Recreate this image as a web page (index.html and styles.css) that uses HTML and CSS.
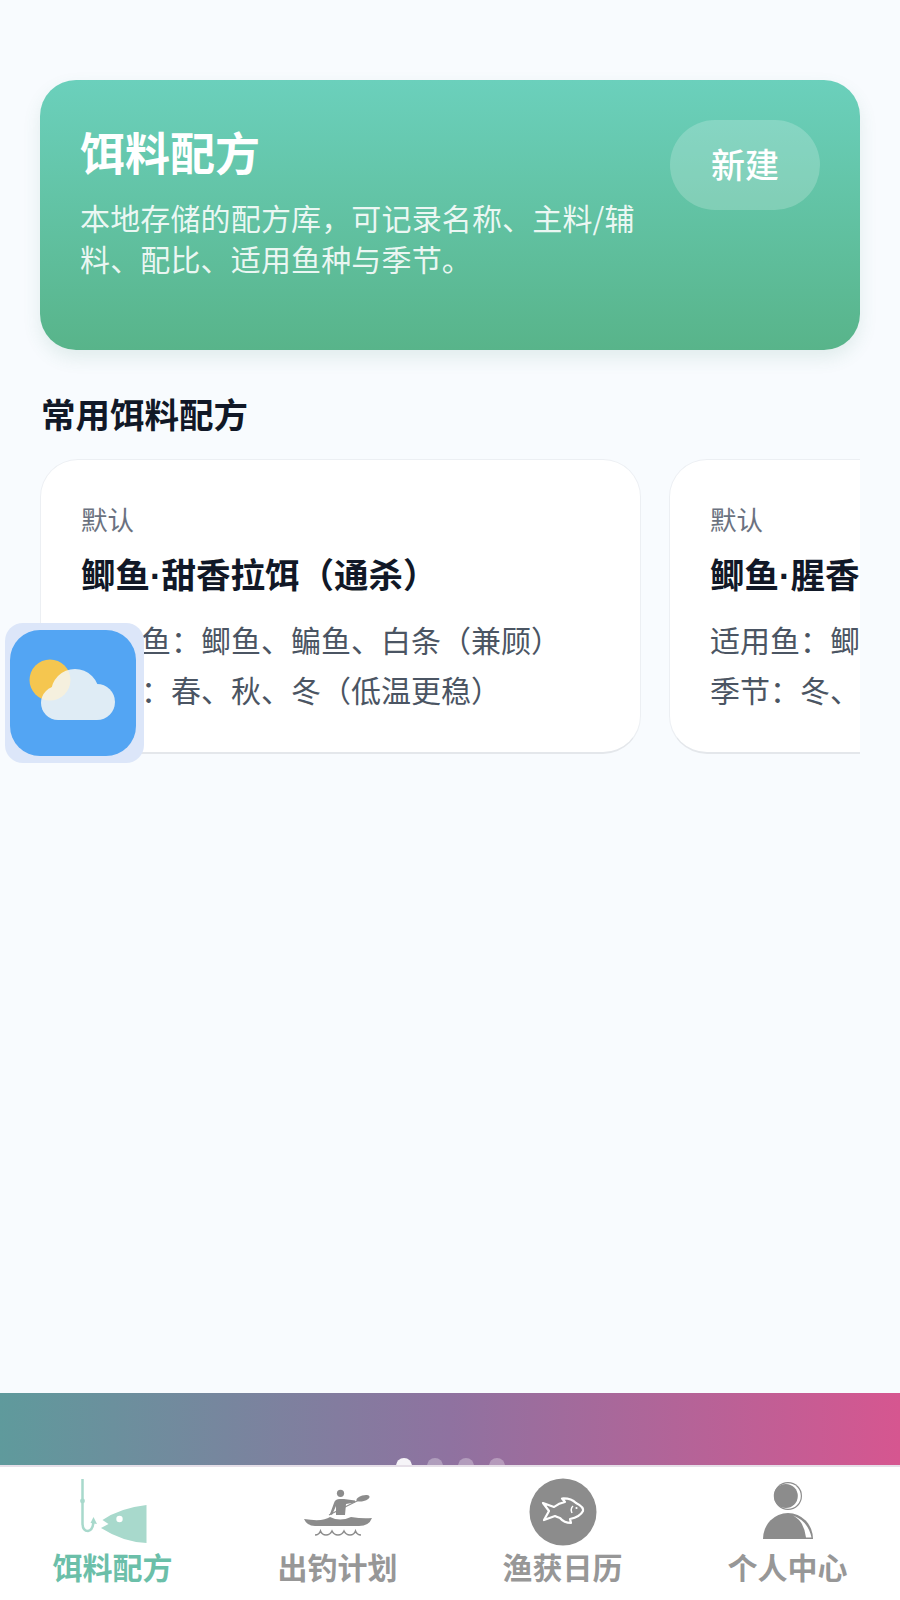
FILE: index.html
```html
<!DOCTYPE html>
<html lang="zh-CN">
<head>
    <meta charset="UTF-8">
    <meta name="viewport" content="width=device-width, initial-scale=1.0">
    <title>饵料配方</title>
    <link rel="stylesheet" href="styles.css">
</head>
<body>
    <div class="page">
        <main class="content">
            <section class="hero">
                <div class="hero-text">
                    <h1>饵料配方</h1>
                    <p>本地存储的配方库，可记录名称、主料/辅料、配比、适用鱼种与季节。</p>
                </div>
                <button class="new-btn">新建</button>
            </section>

            <h2 class="section-title">常用饵料配方</h2>
            <div class="cards">
                <article class="card">
                    <div class="card-tag">默认</div>
                    <h3>鲫鱼<span class="sep">·</span>甜香拉饵（通杀）</h3>
                    <p>适用鱼：鲫鱼、鳊鱼、白条（兼顾）</p>
                    <p>季节：春、秋、冬（低温更稳）</p>
                </article>
                <article class="card">
                    <div class="card-tag">默认</div>
                    <h3>鲫鱼<span class="sep">·</span>腥香拉饵（冬季）</h3>
                    <p>适用鱼：鲫鱼、鲤鱼</p>
                    <p>季节：冬、春</p>
                </article>
            </div>
        </main>

        <div class="banner">
            <span class="dot dot-active"></span>
            <span class="dot"></span>
            <span class="dot"></span>
            <span class="dot"></span>
        </div>

        <nav class="tabbar">
            <div class="tab tab-active">
                <svg class="tab-icon" viewBox="0 0 90 70">
                    <path d="M14.5 3V47Q14.5 55 20 55Q25.5 54 25.5 44" fill="none" stroke="#a8d9cc" stroke-width="2.500"/>
                    <path d="M25.5 41L29 48L22.500 47Z" fill="#a8d9cc"/>
                    <circle cx="14.5" cy="25" r="2.400" fill="#a8d9cc"/>
                    <path d="M34.5 44Q52 32 78.5 29V67Q55 66 33 52L40.5 48Z" fill="#a8d9cc"/>
                    <circle cx="51.5" cy="43" r="3.200" fill="#fff"/>
                </svg>
                <span>饵料配方</span>
            </div>
            <div class="tab">
                <svg class="tab-icon" viewBox="0 0 90 70">
                    <circle cx="47.5" cy="17.3" r="3.600" fill="#8c8c8c"/>
                    <path d="M37 38L41 27Q42 23 47 23H51L62 24.500V26.500L53 28L52 39H43V30L39 39Z" fill="#8c8c8c"/>
                    <path d="M36 39L66 24" fill="none" stroke="#8c8c8c" stroke-width="1.200"/>
                    <ellipse cx="70" cy="22.300" rx="6.800" ry="2.800" transform="rotate(-16 70 22.300)" fill="#8c8c8c"/>
                    <path d="M11 43Q30 46 37 41Q47 46 58 41Q70 43 79 42Q76 50 66 50H22Q14 50 11 43Z" fill="#8c8c8c"/>
                    <path d="M22 59Q26 59 27.500 55Q29 59 33 59Q37 59 39 55Q41 59 45 59Q49 59 51 55Q53 59 57 59Q61 59 62.500 55Q64 59 68 59" fill="none" stroke="#8c8c8c" stroke-width="1.500"/>
                </svg>
                <span>出钓计划</span>
            </div>
            <div class="tab">
                <svg class="tab-icon" viewBox="0 0 90 70">
                    <circle cx="45" cy="36" r="33.500" fill="#8c8c8c"/>
                    <path d="M25 27L36 31Q41 27 47 26L44 22.500Q53 22 58 27Q66 31 65 35Q62 41 52 43L53 47Q46 47 42 42Q39 41 37 40L26 44L31 35Z" fill="none" stroke="#fff" stroke-width="2.200" stroke-linejoin="round"/>
                    <path d="M55 30Q52 33 54 37" fill="none" stroke="#fff" stroke-width="1.500"/>
                    <circle cx="58.500" cy="32" r="1.100" fill="#fff"/>
                </svg>
                <span>渔获日历</span>
            </div>
            <div class="tab">
                <svg class="tab-icon" viewBox="0 0 90 70">
                    <circle cx="45" cy="20" r="14" fill="#8c8c8c"/>
                    <circle cx="45" cy="20" r="12.800" fill="#fff"/>
                    <circle cx="42.800" cy="20" r="12" fill="#8c8c8c"/>
                    <path d="M20 63A25 26 0 0 1 70 63Z" fill="#8c8c8c"/>
                    <path d="M50 39.500Q61 45 63 61.500H68.500Q65 45 50 39.500Z" fill="#fff"/>
                </svg>
                <span>个人中心</span>
            </div>
        </nav>

        <div class="weather">
            <svg class="weather-icon" viewBox="0 0 126 126">
                <rect width="126" height="126" rx="30" fill="#53a5f3"/>
                <circle cx="40" cy="50" r="20.500" fill="#f5c64f"/>
                <g fill="#f6f8f6" opacity="0.86">
                    <circle cx="48" cy="73" r="17"/>
                    <circle cx="65" cy="63" r="24"/>
                    <circle cx="87" cy="72" r="18"/>
                    <rect x="48" y="66" width="39" height="24"/>
                </g>
            </svg>
        </div>
    </div>
</body>
</html>
```

FILE: styles.css
```css
body {
    margin: 0;
    background-color: #f8fbfe;
    font-family: "Noto Sans CJK SC", "Noto Sans", sans-serif;
}

.page {
    position: relative;
    display: flex;
    flex-direction: column;
    min-height: 1600px;
}

.content {
    flex: 1;
    padding: 80px 40px 0;
}

.hero {
    display: flex;
    justify-content: space-between;
    align-items: flex-start;
    height: 190px;
    padding: 40px;
    border-radius: 36px;
    background: linear-gradient(180deg, #6bd0bc, #58b48a);
    box-shadow: 0 8px 18px rgba(60, 130, 110, 0.12);
    color: white;
}

.hero-text {
    width: 566px;
}

.hero h1 {
    margin: 2px 0 15px;
    font-size: 45px;
    line-height: 60px;
    font-weight: 700;
}

.hero p {
    margin: 0;
    font-size: 30px;
    line-height: 41px;
    letter-spacing: 0.15px;
    color: rgba(255, 255, 255, 0.88);
}

.new-btn {
    width: 150px;
    height: 90px;
    padding: 0 0 4px;
    border: none;
    border-radius: 45px;
    background-color: rgba(255, 255, 255, 0.2);
    color: white;
    font-family: inherit;
    font-size: 34px;
    font-weight: 500;
}

.section-title {
    margin: 39px 0 22px 1px;
    font-size: 34.5px;
    line-height: 48px;
    font-weight: 700;
    color: #111827;
}

.cards {
    display: flex;
    gap: 28px;
    overflow: hidden;
    padding-bottom: 4px;
}

.card {
    flex: 0 0 601px;
    box-sizing: border-box;
    height: 295px;
    padding: 41px 40px;
    border: 1px solid #eceff3;
    border-bottom: 2px solid #e4e7eb;
    border-radius: 38px;
    background-color: white;
    white-space: nowrap;
    overflow: hidden;
}

.card-tag {
    font-size: 26.5px;
    line-height: 36px;
    color: #6b7280;
}

.card h3 {
    margin: 12px 0 14px;
    font-size: 34.5px;
    line-height: 48px;
    font-weight: 700;
    color: #111827;
}

.sep {
    font-family: "Liberation Sans", sans-serif;
}

.card p {
    margin: 0;
    font-size: 30px;
    line-height: 50px;
    color: #4b5563;
}

.banner {
    position: relative;
    height: 72px;
    background: linear-gradient(90deg, #5f9a9c, #8f72a0 50%, #d65690);
    overflow: hidden;
    display: flex;
    justify-content: center;
    align-items: flex-end;
    gap: 15px;
}

.dot {
    width: 16px;
    height: 16px;
    margin-bottom: -9px;
    border-radius: 50%;
    background-color: rgba(255, 255, 255, 0.3);
}

.dot-active {
    background-color: rgba(255, 255, 255, 0.92);
}

.tabbar {
    display: grid;
    grid-template-columns: repeat(4, 1fr);
    height: 135px;
    box-sizing: border-box;
    padding-top: 9px;
    border-top: 2px solid #e6dfe8;
    background-color: white;
}

.tab {
    display: flex;
    flex-direction: column;
    align-items: center;
    font-size: 30px;
    line-height: 40px;
    font-weight: 700;
    color: #979797;
}

.tab-active {
    color: #6bbfa9;
}

.tab-icon {
    width: 90px;
    height: 70px;
}

/* floating weather button */
.weather {
    position: absolute;
    left: 5px;
    top: 623px;
    padding: 7px 8px 7px 5px;
    border-radius: 18px;
    background-color: #dce6f9;
}

.weather-icon {
    display: block;
    width: 126px;
    height: 126px;
}
```
